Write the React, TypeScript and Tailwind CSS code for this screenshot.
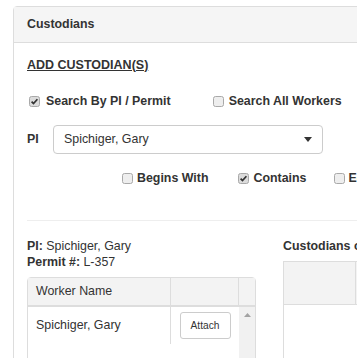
import React from "react";

function Check({ checked }: { checked?: boolean }) {
  return (
    <svg width="11" height="11" viewBox="0 0 11 11" className="shrink-0">
      <rect
        x="0.5"
        y="0.5"
        width="10"
        height="10"
        rx="2"
        fill={checked ? "#dcdcdc" : "#eeeeee"}
        stroke="#a9a9a9"
      />
      {checked && (
        <path d="M2.6 5.6 L4.5 7.6 L8.4 3.2" stroke="#333" strokeWidth="1.7" fill="none" />
      )}
    </svg>
  );
}

export default function App() {
  return (
    <div className="h-[358px] w-[357px] overflow-hidden bg-white pt-[6px] font-['Liberation_Sans',Arial,sans-serif] text-[#333]">
      <div className="ml-[13px] h-[400px] w-[420px] rounded-t-[4px] border border-[#ddd]">
        {/* Header */}
        <div className="flex h-[36px] items-center border-b border-[#ddd] bg-[#f5f5f5] px-[13px] text-[12.4px] font-bold">
          Custodians
        </div>

        {/* Body */}
        <div className="pl-[13px]">
          <div className="mt-[13px] flex h-[18px] items-center">
            <span className="text-[12.5px] font-bold underline">ADD CUSTODIAN(S)</span>
          </div>

          <div className="mt-[18px] flex h-[18px] items-center text-[12.4px] font-bold">
            <div className="ml-[2px] flex items-center gap-[6px]">
              <Check checked />
              <span>Search By PI / Permit</span>
            </div>
            <div className="ml-[42px] flex items-center gap-[5px]">
              <Check />
              <span>Search All Workers</span>
            </div>
          </div>

          <div className="mt-[15px] flex h-[29px] items-center">
            <span className="w-[26px] text-[12.4px] font-bold">PI</span>
            <div className="flex h-[29px] w-[270px] items-center justify-between rounded-[4px] border border-[#ccc] pl-[10px] pr-[10px] text-[12.4px]">
              <span>Spichiger, Gary</span>
              <svg width="8" height="5" viewBox="0 0 8 5">
                <path d="M0 0 L8 0 L4 5 Z" fill="#333" />
              </svg>
            </div>
          </div>

          <div className="mt-[15px] flex h-[18px] items-center text-[12.4px] font-bold">
            <div className="ml-[95px] flex items-center gap-[4px]">
              <Check />
              <span>Begins With</span>
            </div>
            <div className="ml-[30px] flex items-center gap-[4px]">
              <Check checked />
              <span>Contains</span>
            </div>
            <div className="ml-[27px] flex items-center gap-[4px]">
              <Check />
              <span>Equals</span>
            </div>
          </div>

          <div className="mt-[33px] border-t border-[#eee]" />

          <div className="mt-[17px] flex">
            {/* Left column */}
            <div className="w-[229px]">
              <div className="flex h-[16px] items-center text-[12.4px]">
                <b>PI:</b>&nbsp;Spichiger, Gary
              </div>
              <div className="flex h-[16px] items-center text-[12.4px]">
                <b>Permit #:</b>&nbsp;L-357
              </div>
              <div className="mt-[7px] h-[120px] rounded-t-[4px] border border-[#ddd]">
                <div className="flex h-[29px] border-b-2 border-[#ddd] bg-[#f3f3f3] text-[12.4px]">
                  <div className="flex w-[143px] items-center border-r border-[#ddd] pl-[8px]">Worker Name</div>
                  <div className="w-[68px] border-r border-[#ddd]" />
                  <div className="flex-1" />
                </div>
                <div className="flex h-[90px]">
                  <div className="flex h-[37px] w-[143px] items-center border-r border-[#ddd] pl-[8px] text-[12.4px]">
                    Spichiger, Gary
                  </div>
                  <div className="flex h-[37px] w-[68px] items-center justify-center">
                    <div className="flex h-[27px] w-[51px] items-center justify-center rounded-[3px] border border-[#ccc] text-[10.2px]">
                      Attach
                    </div>
                  </div>
                  <div className="flex flex-1 justify-center bg-[#f1f1f1] pt-[6px]">
                    <svg width="7" height="4" viewBox="0 0 7 4">
                      <path d="M0 4 L7 4 L3.5 0 Z" fill="#a3a3a3" />
                    </svg>
                  </div>
                </div>
              </div>
            </div>

            {/* Right column */}
            <div className="ml-[27px] flex-1">
              <div className="flex h-[16px] items-center whitespace-nowrap text-[12.4px] font-bold">
                Custodians on Permit
              </div>
              <div className="mt-[7px] h-[120px] border border-[#ddd]">
                <div className="flex h-[43px] border-b border-[#ddd] bg-[#f3f3f3]">
                  <div className="w-[72px] border-r border-[#ddd]" />
                </div>
              </div>
            </div>
          </div>
        </div>
      </div>
    </div>
  );
}
